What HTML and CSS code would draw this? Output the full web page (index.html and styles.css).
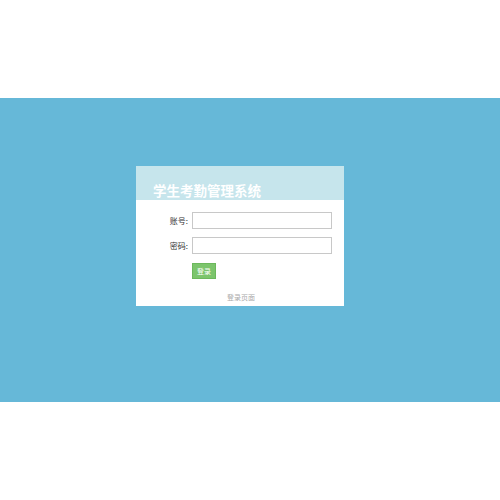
FILE: index.html
```html
<!DOCTYPE html>
<html>
<head>
<meta charset="utf-8">
<link rel="stylesheet" href="styles.css">
</head>
<body>
<div class="top"></div>
<div class="band">
  <div class="card">
    <div class="head">学生考勤管理系统</div>
    <div class="form">
      <div class="row"><label class="lbl">账号:</label><input class="inp" type="text"></div>
      <div class="row"><label class="lbl">密码:</label><input class="inp" type="password"></div>
      <div class="row"><span class="lbl"></span><button class="btn">登录</button></div>
    </div>
    <div class="foot">登录页面</div>
  </div>
</div>
</body>
</html>
```
FILE: styles.css
```css
html, body { margin: 0; padding: 0; background: #fff; }
body { font-family: "Noto Sans CJK SC", "Noto Sans", sans-serif; }
.top { height: 98px; }
.band {
  height: 304px;
  background: #66b8d8;
  padding: 68px 0 0 136px;
  box-sizing: border-box;
}
.card {
  width: 208px;
  height: 140px;
  background: #fff;
  display: flex;
  flex-direction: column;
}
.head {
  height: 34px;
  box-sizing: border-box;
  background: #c6e5ec;
  color: #fff;
  font-weight: bold;
  font-size: 13.5px;
  line-height: 16px;
  padding: 16px 0 0 17px;
}
.form {
  display: flex;
  flex-direction: column;
  gap: 8px;
  padding-top: 12px;
}
.row { display: flex; align-items: center; gap: 4px; }
.lbl {
  width: 52px;
  text-align: right;
  font-size: 8px;
  color: #333;
  line-height: 17px;
}
.inp {
  width: 140px;
  height: 17px;
  box-sizing: border-box;
  border: 1px solid #c8c8c8;
  margin: 0;
  padding: 0 3px;
  outline: none;
}
.btn {
  margin: 1px 0 0 0;
  width: 24px;
  height: 16px;
  padding: 0;
  border: 1px solid #6cb85c;
  background: #7cc56c;
  color: #fff;
  font-family: "Noto Sans CJK SC", sans-serif;
  font-size: 7px;
  line-height: 14px;
}
.foot {
  margin-top: 13px;
  padding-left: 91px;
  font-size: 7px;
  line-height: 10px;
  color: #aaa;
}
```
